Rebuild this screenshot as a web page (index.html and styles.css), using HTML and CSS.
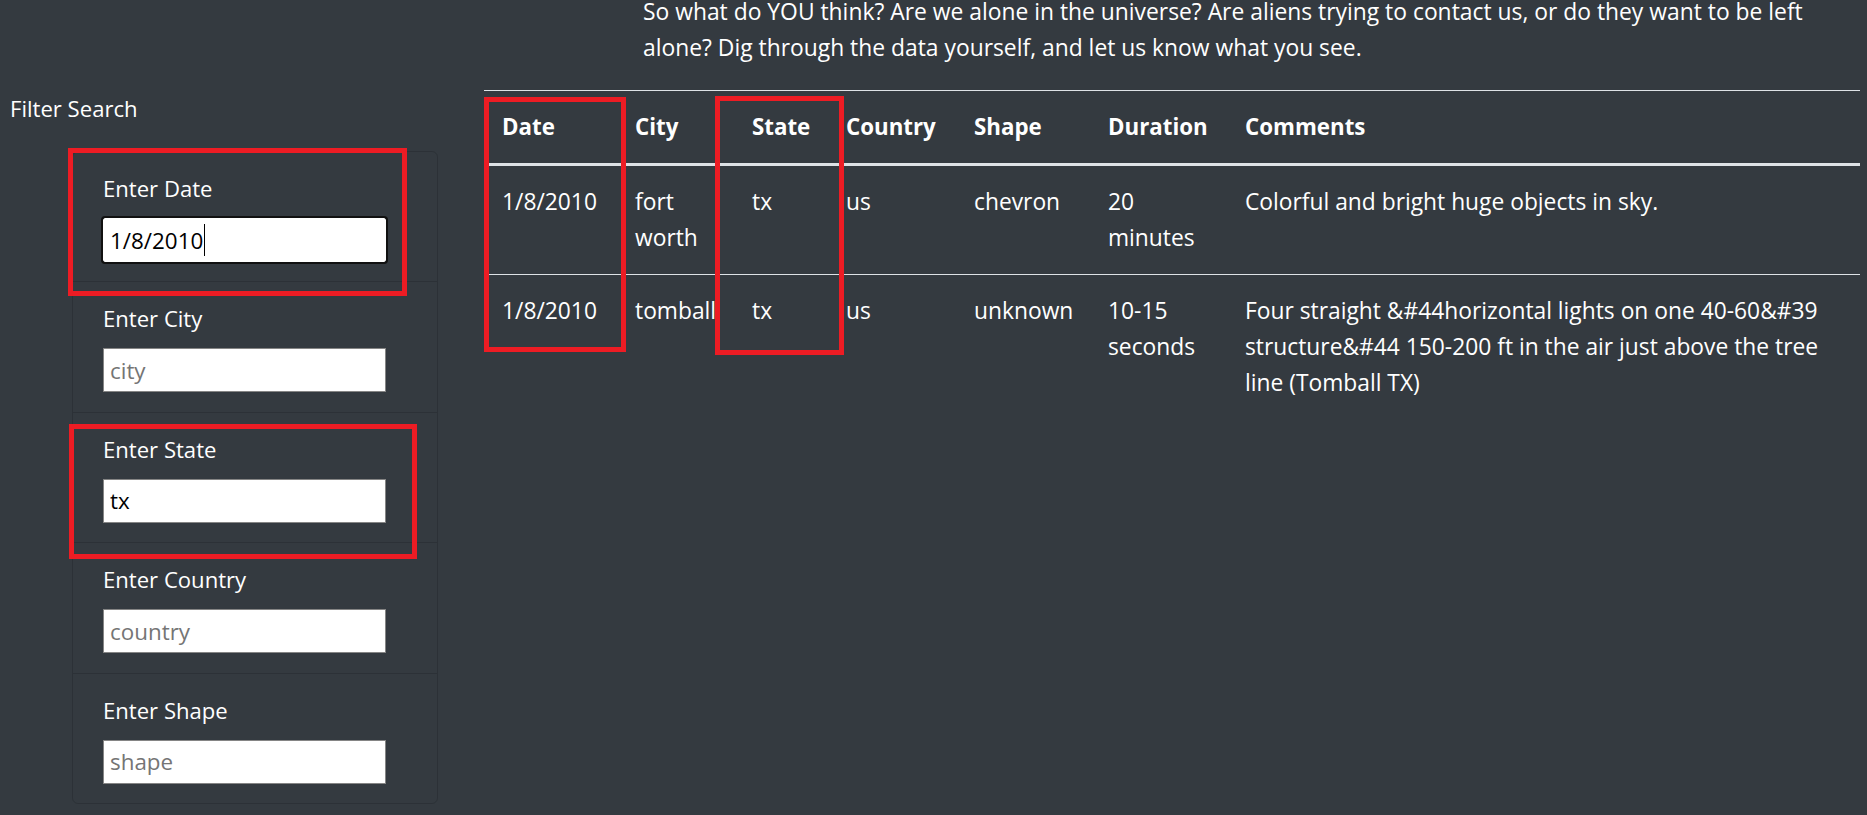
FILE: index.html
```html
<!DOCTYPE html>
<html lang="en">
<head>
<meta charset="utf-8">
<title>UFO Sightings</title>
<link rel="stylesheet" href="styles.css">
</head>
<body>
<div class="page">
  <p class="intro">So what do YOU think? Are we alone in the universe? Are aliens trying to contact us, or do they want to be left alone? Dig through the data yourself, and let us know what you see.</p>
  <div class="content">
    <aside class="filters">
      <h5 class="filters-title">Filter Search</h5>
      <ul class="list-group">
        <li class="list-group-item">
          <label for="datetime">Enter Date</label>
          <div class="input-wrap">
            <input id="datetime" class="field focused" type="text" placeholder="date" value="1/8/2010">
            <span class="caret"></span>
          </div>
        </li>
        <li class="list-group-item">
          <label for="city">Enter City</label>
          <input id="city" class="field" type="text" placeholder="city">
        </li>
        <li class="list-group-item">
          <label for="state">Enter State</label>
          <input id="state" class="field" type="text" placeholder="state" value="tx">
        </li>
        <li class="list-group-item">
          <label for="country">Enter Country</label>
          <input id="country" class="field" type="text" placeholder="country">
        </li>
        <li class="list-group-item">
          <label for="shape">Enter Shape</label>
          <input id="shape" class="field" type="text" placeholder="shape">
        </li>
      </ul>
    </aside>
    <main class="results">
      <table class="ufo-table">
        <colgroup>
          <col class="c-date"><col class="c-city"><col class="c-state"><col class="c-country"><col class="c-shape"><col class="c-duration"><col class="c-comments">
        </colgroup>
        <thead>
          <tr><th>Date</th><th>City</th><th class="state-cell">State</th><th>Country</th><th>Shape</th><th>Duration</th><th>Comments</th></tr>
        </thead>
        <tbody>
          <tr><td>1/8/2010</td><td>fort worth</td><td class="state-cell">tx</td><td>us</td><td>chevron</td><td>20 minutes</td><td>Colorful and bright huge objects in sky.</td></tr>
          <tr><td>1/8/2010</td><td>tomball</td><td class="state-cell">tx</td><td>us</td><td>unknown</td><td>10-15 seconds</td><td>Four straight &amp;#44horizontal lights on one 40-60&amp;#39 structure&amp;#44 150-200 ft in the air just above the tree line (Tomball TX)</td></tr>
        </tbody>
      </table>
    </main>
  </div>
  <div class="mark mark-date-filter"></div>
  <div class="mark mark-state-filter"></div>
  <div class="mark mark-date-col"></div>
  <div class="mark mark-state-col"></div>
</div>
</body>
</html>
```

FILE: styles.css
```css
html, body {
  margin: 0;
  padding: 0;
  background: #343a40;
}
body {
  color: #fff;
  font-family: "Open Sans", "Noto Sans", sans-serif;
  font-size: 22.8px;
  line-height: 36px;
  overflow: hidden;
}
.page {
  position: relative;
  display: flow-root;
  padding-right: 7px;
  min-height: 815px;
}
.intro {
  margin: -6px 0 24px 643px;
  font-size: 22.85px;
}
.content {
  display: flex;
  align-items: flex-start;
}
.filters {
  width: 484px;
  flex: 0 0 484px;
  padding-left: 10px;
  box-sizing: border-box;
  font-size: 22.1px;
}
.filters-title {
  margin: 0;
  font-size: 22.1px;
  font-weight: 400;
  line-height: 36px;
}
.list-group {
  list-style: none;
  margin: 25px 0 0 62px;
  padding: 0;
  width: 366px;
  border: 1px solid rgba(0, 0, 0, 0.14);
  border-radius: 6px;
  box-sizing: border-box;
}
.list-group-item {
  padding: 18px 30px 19.4px;
  border-top: 1px solid rgba(0, 0, 0, 0.14);
}
.list-group-item:first-child {
  border-top: 0;
}
.list-group-item label {
  display: block;
  margin-bottom: 12px;
}
.input-wrap {
  position: relative;
}
.field {
  display: block;
  width: 283px;
  height: 44px;
  box-sizing: border-box;
  margin: 0;
  padding: 0 6px;
  border: 1px solid #858585;
  background: #fff;
  color: #000;
  font-family: inherit;
  font-size: 22.4px;
}
.field::placeholder {
  color: #757575;
}
.field.focused {
  outline: 2px solid #111;
  outline-offset: 0;
  border-color: #fff;
  border-radius: 2px;
}
.caret {
  position: absolute;
  left: 101px;
  top: 6px;
  width: 1px;
  height: 32px;
  background: #000;
}
.results {
  flex: 1 1 auto;
}
.ufo-table {
  width: 100%;
  table-layout: fixed;
  border-collapse: separate;
  border-spacing: 0;
}
.c-date { width: 133px; }
.c-city { width: 116px; }
.c-state { width: 95px; }
.c-country { width: 128px; }
.c-shape { width: 134px; }
.c-duration { width: 137px; }
.ufo-table th,
.ufo-table td {
  padding: 18px;
  text-align: left;
  vertical-align: top;
}
.ufo-table th {
  font-size: 22.3px;
  font-weight: 700;
  border-top: 1px solid #dee2e6;
  border-bottom: 3px solid #dee2e6;
}
.ufo-table tbody tr + tr td {
  border-top: 1px solid #dee2e6;
}
.ufo-table .state-cell {
  padding-left: 19px;
}
.mark {
  position: absolute;
  border: 5px solid #ed1c24;
  box-sizing: border-box;
}
.mark-date-filter { left: 68px; top: 148px; width: 339px; height: 148px; }
.mark-state-filter { left: 69px; top: 424px; width: 348px; height: 135px; }
.mark-date-col { left: 484px; top: 97px; width: 142px; height: 255px; }
.mark-state-col { left: 715px; top: 96px; width: 129px; height: 259px; }
```
